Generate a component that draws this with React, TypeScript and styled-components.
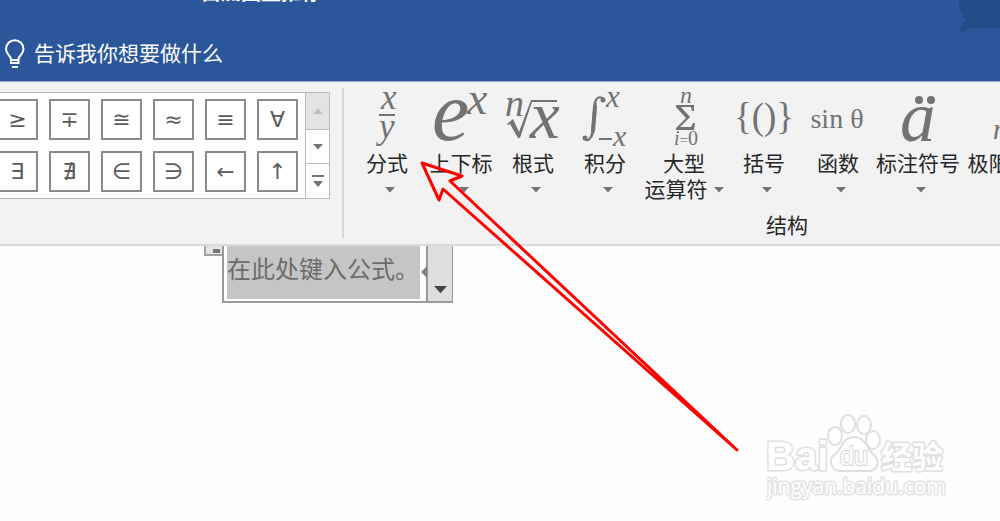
import React from 'react';
import styled, { createGlobalStyle } from 'styled-components';

const GlobalStyle = createGlobalStyle`
  * { box-sizing: border-box; }
  html, body { margin: 0; overflow: hidden; background: #fff; }
  body, button, input {
    font-family: "Liberation Sans", "Noto Sans CJK SC", sans-serif;
  }
`;

const Page = styled.div`
  position: relative;
  min-height: 100vh;
  overflow: hidden;
  background: #fefefe;
`;

const Header = styled.header`
  position: relative;
  height: 82px;
  background: #2b579a;
  border-bottom: 1px solid #8ea8d0;
  color: #fff;
`;

const TitleBar = styled.div`
  display: flex;
  align-items: flex-end;
  height: 4px;
  padding-left: 201px;
  overflow: hidden;
  font-size: 20px;
  line-height: 22px;
  white-space: nowrap;
`;

const FileName = styled.span`
  font-weight: bold;
`;

const AppName = styled.span`
  margin-right: 32px;
  color: #9db3d6;
  font-weight: normal;
`;

const TellMe = styled.label`
  display: flex;
  align-items: center;
  gap: 9px;
  padding: 35px 0 0 5px;
`;

const TellMeInput = styled.input`
  width: 260px;
  height: 28px;
  padding: 0;
  border: 0;
  outline: 0;
  background: transparent;
  color: #fff;
  font-size: 21px;
  &::placeholder { color: #fff; opacity: 1; }
`;

const Backdrop = styled.svg`
  position: absolute;
  top: 0;
  right: 0;
`;

const Ribbon = styled.section`
  display: flex;
  align-items: flex-start;
  height: 164px;
  overflow: hidden;
  background: #f2f2f2;
  border-bottom: 2px solid #dadada;
`;

const Gallery = styled.div`
  display: flex;
  flex: none;
  margin-top: 10px;
`;

const SymbolGrid = styled.div`
  display: grid;
  grid-template-columns: repeat(6, 41px);
  gap: 11px;
  justify-content: end;
  width: 305px;
  padding: 6px 7px 6px 0;
  overflow: hidden;
  background: #fff;
  border: solid #b3b6b9;
  border-width: 1px 0;
`;

const SymbolButton = styled.button`
  display: flex;
  align-items: center;
  justify-content: center;
  height: 41px;
  padding: 0;
  border: 2px solid #8a8a8a;
  background: #fff;
  color: #5c5c5c;
  font-family: "DejaVu Sans", sans-serif;
  font-size: 22px;
  line-height: 24px;
`;

const Scroller = styled.div`
  display: grid;
  grid-template-rows: 36px 33px 1fr;
  gap: 1px;
  width: 25px;
  padding: 1px;
  background: #bcbcbc;
`;

const ScrollButton = styled.button<{ $off?: boolean }>`
  display: flex;
  align-items: center;
  justify-content: center;
  padding: 0;
  border: 0;
  background: ${p => (p.$off ? '#e3e3e3' : '#fff')};
`;

const Divider = styled.div`
  flex: none;
  width: 2px;
  height: 150px;
  margin: 6px 0 0 12px;
  background: #d8d8d8;
`;

const Group = styled.div`
  flex: none;
  width: 886px;
  padding: 6px 0 0 6px;
`;

const Buttons = styled.div`
  display: flex;
  height: 125px;
`;

const StructureButton = styled.button<{ $width: number }>`
  display: flex;
  flex: none;
  flex-direction: column;
  align-items: center;
  width: ${p => p.$width}px;
  padding: 0;
  border: 0;
  background: none;
  color: #262626;
  font-size: 21px;
  line-height: 26px;
  white-space: nowrap;
`;

const LabelRow = styled.span`
  display: flex;
  align-items: center;
  justify-content: center;
  gap: 6px;
  height: 26px;
`;

const CaretRow = styled(LabelRow)`
  padding-left: 6px;
`;

const GroupLabel = styled.div`
  padding-right: 6px;
  font-size: 21px;
  line-height: 26px;
  text-align: center;
  color: #262626;
`;

const Document = styled.main`
  display: flex;
  align-items: flex-start;
  padding-left: 204px;
`;

const Handle = styled.button`
  display: flex;
  justify-content: center;
  width: 18px;
  height: 10px;
  padding: 3px 0 0 4px;
  border: solid #a0a0a0;
  border-width: 0 0 2px 2px;
  background: #e3e3e3;
`;

const HandleDots = styled.span`
  width: 7px;
  height: 4px;
  background: #777;
`;

const Equation = styled.div`
  display: flex;
  height: 57px;
  border: solid #9a9a9a;
  border-width: 0 1px 2px 2px;
  background: #fff;
`;

const EquationText = styled.div`
  height: 53px;
  margin: 0 6px 0 3px;
  padding: 6px 1px 0 0;
  background: #c5c5c5;
  color: #6c6c6c;
  font-size: 24px;
  line-height: 36px;
  white-space: nowrap;
`;

const EquationMenu = styled.button`
  position: relative;
  display: flex;
  align-items: flex-end;
  justify-content: center;
  width: 26px;
  padding: 0 0 7px;
  border: 0;
  border-left: 2px solid #9a9a9a;
  background: #dfdfdf;
`;

const SideMark = styled.svg`
  position: absolute;
  left: -7px;
  top: 20px;
`;

const Pointer = styled.svg`
  position: absolute;
  left: 0;
  top: 0;
  pointer-events: none;
`;

const Watermark = styled.svg`
  position: absolute;
  right: 50px;
  bottom: 15px;
`;

const Caret = ({ color = '#737373', up = false, w = 10 }: { color?: string; up?: boolean; w?: number }) => (
  <svg width={w} height={w > 10 ? 8 : 6} viewBox="0 0 10 6" preserveAspectRatio="none" aria-hidden="true">
    <path d={up ? 'M0 6L5 0.500L10 6Z' : 'M0 0H10L5 5.500Z'} fill={color} />
  </svg>
);

const INK = '#737373';

const Art = ({ children }: { children: React.ReactNode }) => (
  <svg
    width="80" height="63" viewBox="0 0 80 63" overflow="visible" fill={INK} aria-hidden="true"
    fontFamily='"Liberation Serif", serif' fontStyle="italic"
  >
    {children}
  </svg>
);

const structures: { label: string; second?: string; width: number; art: React.ReactNode }[] = [
  {
    label: '分式', width: 74,
    art: <>
      <text x="34" y="21" fontSize="35">x</text>
      <path d="M32 26H48V28H32Z" />
      <text x="32" y="50" fontSize="35">y</text>
    </>,
  },
  {
    label: '上下标', width: 74,
    art: <>
      <text x="11" y="52" fontSize="84">e</text>
      <text x="46" y="26" fontSize="46">x</text>
    </>,
  },
  {
    label: '根式', width: 70,
    art: <>
      <text x="12" y="28" fontSize="38">n</text>
      <text x="37" y="50" fontSize="67">x</text>
      <path d="M14 36L20 31L26 44L38 12H64V14H39L27 50H25L17 36L15 37Z" />
    </>,
  },
  {
    label: '积分', width: 74,
    art: <>
      <path d="M19 51C23 54 26 51 27 45L29 19C30 10 34 7 39 11" fill="none" stroke={INK} strokeWidth="2" />
      <path d="M26 45L28 19L31 12L32 19L30 43L27 50Z" />
      <circle cx="20" cy="50" r="2.500" /><circle cx="38" cy="12" r="2.500" />
      <text x="41" y="19" fontSize="31">x</text>
      <path d="M34 50H47V52H34Z" />
      <text x="48" y="58" fontSize="30">x</text>
    </>,
  },
  {
    label: '大型', second: '运算符', width: 84,
    art: <>
      <text x="36" y="15" fontSize="24">n</text>
      <path d="M32 17H50V23H48L47 19H37L46 29L36 39H47L49 35H51L50 42H32V40L42 30L32 19Z" />
      <text x="30" y="57" fontSize="20">i<tspan fontStyle="normal" fontSize="15">=</tspan><tspan fontStyle="normal">0</tspan></text>
    </>,
  },
  {
    label: '括号', width: 76,
    art: <text x="40" y="41" fontSize="37" fontStyle="normal" textAnchor="middle">{'{()}'}</text>,
  },
  {
    label: '函数', width: 72,
    art: <text x="39" y="40" fontSize="28" fontStyle="normal" textAnchor="middle">sin θ</text>,
  },
  {
    label: '标注符号', width: 88,
    art: <>
      <text x="22" y="53" fontSize="71">a</text>
      <circle cx="41" cy="12" r="4" /><circle cx="53" cy="12" r="4" />
    </>,
  },
  {
    label: '极限和对数', width: 116,
    art: <text x="13" y="51" fontSize="29">n→∞</text>,
  },
];

const symbols = ['≥', '∓', '≅', '≈', '≡', '∀', '∃', '∄', '∈', '∋', '←', '↑'];

export default function App() {
  return (
    <Page>
      <GlobalStyle />
      <Header>
        <Backdrop width="42" height="36" aria-hidden="true">
          <path d="M1 0H42V28H22Q10 26 1 35Q2 25 8 20Q0 13 1 0Z" fill="#244d88" />
        </Backdrop>
        <TitleBar>
          <FileName>白底图直推荐 <AppName>uncnn</AppName><AppName>Word</AppName></FileName>
        </TitleBar>
        <TellMe>
          <svg width="20" height="30" viewBox="0 0 20 30" fill="none" stroke="#fff" strokeWidth="2" aria-hidden="true">
            <path d="M6 24V20C5 16 1 15 1 10a8.700 8.700 0 0 1 17.500 0c0 5-4 6-5 10v4ZM6 21H13.500M7 28H13" />
          </svg>
          <TellMeInput type="text" aria-label="告诉我你想要做什么" placeholder="告诉我你想要做什么" />
        </TellMe>
      </Header>

      <Ribbon>
        <Gallery>
          <SymbolGrid>
            {symbols.map(s => <SymbolButton key={s}>{s}</SymbolButton>)}
          </SymbolGrid>
          <Scroller>
            <ScrollButton $off aria-label="向上"><Caret up color="#bdbdbd" /></ScrollButton>
            <ScrollButton aria-label="向下"><Caret /></ScrollButton>
            <ScrollButton aria-label="更多">
              <svg width="12" height="12" fill="#737373" aria-hidden="true">
                <path d="M0 0H12V2H0ZM1 6H11L6 12Z" />
              </svg>
            </ScrollButton>
          </Scroller>
        </Gallery>
        <Divider />
        <Group>
          <Buttons>
            {structures.map(s => (
              <StructureButton key={s.label} $width={s.width}>
                <Art>{s.art}</Art>
                <LabelRow>{s.label}</LabelRow>
                {s.second
                  ? <LabelRow>{s.second}<Caret /></LabelRow>
                  : <CaretRow><Caret /></CaretRow>}
              </StructureButton>
            ))}
          </Buttons>
          <GroupLabel>结构</GroupLabel>
        </Group>
      </Ribbon>

      <Document>
        <Handle aria-label="移动公式"><HandleDots /></Handle>
        <Equation>
          <EquationText>在此处键入公式。</EquationText>
          <EquationMenu aria-label="公式选项">
            <SideMark width="6" height="12" aria-hidden="true"><path d="M6 0V12L0 6Z" fill="#808080" /></SideMark>
            <Caret color="#444" w={13} />
          </EquationMenu>
        </Equation>
      </Document>

      <Watermark width="184" height="92" viewBox="0 0 184 92" fill="#fff" stroke="#dfdfdf" strokeWidth="3" strokeLinejoin="round" aria-hidden="true">
        <g paintOrder="stroke" fontFamily='"Liberation Sans", "Noto Sans CJK SC", sans-serif' fontWeight="bold">
          <text x="0" y="56" fontSize="40">Bai</text>
          <text x="115" y="54" fontSize="31">经验</text>
          <text x="1" y="80" fontSize="21" fontFamily='"Open Sans", sans-serif' fontWeight="normal" stroke="#e2e2e2">jingyan.baidu.com</text>
        </g>
        <g strokeWidth="2">
          <ellipse cx="69" cy="22" rx="7" ry="9" />
          <ellipse cx="82" cy="10" rx="7" ry="9" />
          <ellipse cx="98" cy="11" rx="7" ry="9" />
          <ellipse cx="107" cy="26" rx="7" ry="9" />
          <path d="M88 23C76 23 76 36 68 41C61 48 67 58 76 57H101C111 58 115 48 108 41C101 36 100 23 88 23Z" />
        </g>
        <text x="74" y="51" fontSize="25" fontFamily='"Liberation Sans", sans-serif' paintOrder="stroke" stroke="#d4d4d4" strokeWidth="2">du</text>
      </Watermark>

      <Pointer width="760" height="470" aria-hidden="true">
        <path
          d="M422 163L462 176L450 181L737 450L443 189L439 200Z"
          fill="none" stroke="#f00" strokeWidth="3" strokeLinejoin="round"
        />
      </Pointer>
    </Page>
  );
}
